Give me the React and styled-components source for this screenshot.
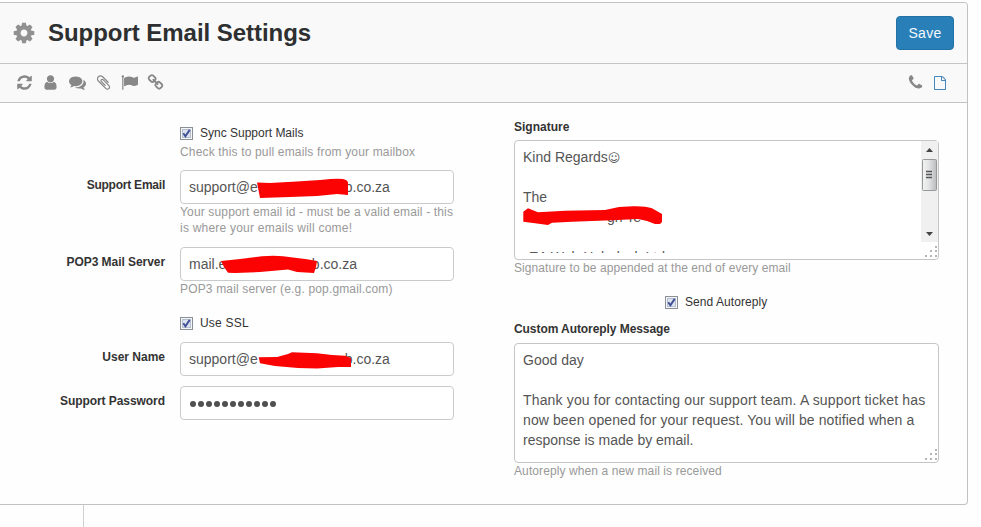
import React from "react";
import styled, { createGlobalStyle } from "styled-components";

const GlobalStyle = createGlobalStyle`
  *, *::before, *::after { box-sizing: border-box; }
  html, body { margin: 0; background: #fefefe; overflow: hidden; }
  body { font-family: "Liberation Sans", Arial, sans-serif; font-size: 12px; color: #333; }
`;

const Page = styled.div`
  display: flex;
  flex-direction: column;
  width: 981px;
  height: 527px;
  padding-top: 2px;
`;

const Panel = styled.main`
  width: 968px;
  height: 503px;
  border: 1px solid #c1c2c2;
  border-left: 0;
  border-radius: 0 4px 4px 0;
  background: #fefefe;
  overflow: hidden;
`;

const Header = styled.header`
  display: flex;
  align-items: center;
  height: 61px;
  padding: 0 13px 0 12px;
  background: #f9f9f9;
  border-bottom: 1px solid #c3c4c4;
`;

const Title = styled.h1`
  flex: 1;
  margin: 0 0 0 12px;
  font-size: 24px;
  line-height: 30px;
  font-weight: bold;
  color: #2d2f30;
  letter-spacing: -0.04px;
`;

const SaveButton = styled.button`
  width: 58px;
  height: 34px;
  border: 1px solid #2372a6;
  border-radius: 4px;
  padding: 0;
  background: #2980b9;
  color: #f3f8fc;
  font: 14px "Liberation Sans", Arial, sans-serif;
  letter-spacing: 0.3px;
`;

const Toolbar = styled.nav`
  display: flex;
  align-items: center;
  justify-content: space-between;
  height: 39px;
  padding: 0 20px 1px 16px;
  background: #f9f9f9;
  border-bottom: 1px solid #c3c4c4;
`;

const IconGroup = styled.div`
  display: flex;
  align-items: center;
  gap: ${(p) => p.$gap}px;
`;

const Glyph = styled.svg`
  display: block;
  flex: none;
  fill: ${(p) => p.$color || "#888"};
`;

const Form = styled.form`
  display: flex;
  gap: 60px;
  padding-top: 16px;
`;

const Column = styled.section`
  display: flex;
  flex-direction: column;
  width: ${(p) => p.$width}px;
  padding-top: ${(p) => p.$top || 0}px;
`;

const Row = styled.div`
  display: grid;
  grid-template-columns: 165px 274px;
  column-gap: 15px;
  margin-top: ${(p) => p.$top || 0}px;
`;

const Cell = styled.div`
  grid-column: 2;
`;

const SideLabel = styled.label`
  padding-top: 7px;
  line-height: 16px;
  font-weight: bold;
  text-align: right;
  white-space: nowrap;
  letter-spacing: ${(p) => p.$ls || 0}px;
`;

const TopLabel = styled.label`
  height: 16px;
  margin-top: ${(p) => p.$top || 0}px;
  line-height: 16px;
  font-weight: bold;
  letter-spacing: ${(p) => p.$ls || 0}px;
`;

const Help = styled.p`
  margin: ${(p) => p.$top || 0}px 0 0;
  line-height: 16px;
  color: #999;
  white-space: nowrap;
  letter-spacing: ${(p) => p.$ls || 0}px;
`;

const CheckRow = styled.label`
  display: flex;
  align-items: center;
  gap: 7px;
  height: 16px;
  margin-top: ${(p) => p.$top || 0}px;
  margin-left: ${(p) => p.$left || 0}px;
  letter-spacing: ${(p) => p.$ls || 0}px;
`;

const Field = styled.div`
  position: relative;
  display: flex;
  align-items: center;
  height: 34px;
  padding: 0 8px;
  border: 1px solid #c9cacb;
  border-radius: 4px;
  background: #fff;
  color: #555;
  font-size: 14px;
  white-space: pre;
`;

const Hidden = styled.span`
  width: ${(p) => p.$width}px;
`;

const Scribble = styled.svg`
  position: absolute;
  left: -1px;
  top: -1px;
  fill: #fb0303;
`;

const Dots = styled.span`
  display: flex;
  gap: 2px;
  padding-left: 1px;
  padding-top: 2px;
`;

const Dot = styled.i`
  width: 6px;
  height: 6px;
  border-radius: 50%;
  background: #505050;
`;

const TextBox = styled.div`
  position: relative;
  height: 120px;
  margin-top: ${(p) => p.$top}px;
  border: 1px solid #c4c5c6;
  border-radius: 4px;
  background: #fff;
  color: #555;
  font-size: 14px;
  line-height: 20px;
`;

const TextArea = styled.div`
  height: ${(p) => p.$height}px;
  padding: 6px 0 0 8px;
  overflow: hidden;
  white-space: pre;
`;

const Line = styled.div`
  height: 20px;
  letter-spacing: ${(p) => p.$ls || 0}px;
  padding-left: ${(p) => p.$left || 0}px;
`;

const Smiley = styled.span`
  font-family: "DejaVu Sans", sans-serif;
  font-size: 12px;
`;

const ScrollBar = styled.svg`
  position: absolute;
  right: 0;
  top: 0;
`;

const Grip = styled.svg`
  position: absolute;
  right: 0;
  bottom: 0;
  fill: #b5b5b5;
`;

const Divider = styled.div`
  width: 84px;
  flex: 1;
  border-right: 1px solid #cfcfcf;
`;

const PATHS = {
  cog: "M1152 896q0-106-75-181t-181-75-181 75-75 181 75 181 181 75 181-75 75-181zm512-109v222q0 12-8 23t-20 13l-185 28q-19 54-39 91 35 50 107 138 10 12 10 25t-9 23q-27 37-99 108t-94 71q-12 0-26-9l-138-108q-44 23-91 38-16 136-29 186-7 28-36 28h-222q-14 0-24.500-8.500t-11.500-21.500l-28-184q-49-16-90-37l-141 107q-10 9-25 9-14 0-25-11-126-114-165-168-7-10-7-23 0-12 8-23 15-21 51-66.500t54-70.500q-27-50-41-99l-183-27q-13-2-21-12.500t-8-23.500v-222q0-12 8-23t19-13l186-28q14-46 39-92-40-57-107-138-10-12-10-24 0-10 9-23 26-36 98.500-107.500t94.500-71.500q13 0 26 10l138 107q44-23 91-38 16-136 29-186 7-28 36-28h222q14 0 24.500 8.500t11.500 21.500l28 184q49 16 90 37l142-107q9-9 24-9 13 0 25 10 129 119 165 170 7 8 7 22 0 12-8 23-15 21-51 66.500t-54 70.500q26 50 41 98l183 28q13 2 21 12.500t8 23.500z",
  refresh: "M1639 1056q0 5-1 7-64 268-268 434.500t-478 166.500q-146 0-282.500-55t-243.500-157l-129 129q-19 19-45 19t-45-19-19-45v-448q0-26 19-45t45-19h448q26 0 45 19t19 45-19 45l-137 137q71 66 161 102t187 36q134 0 250-65t186-179q11-17 53-117 8-23 30-23h192q13 0 22.500 9.500t9.500 22.500zm25-800v448q0 26-19 45t-45 19h-448q-26 0-45-19t-19-45 19-45l138-138q-148-137-349-137-134 0-250 65t-186 179q-11 17-53 117-8 23-30 23h-199q-13 0-22.500-9.500t-9.500-22.500v-7q65-268 270-434.500t480-166.500q146 0 284 55.500t245 156.500l130-129q19-19 45-19t45 19 19 45z",
  user: "M1536 1399q0 109-62.500 187t-150.500 78h-854q-88 0-150.500-78t-62.500-187q0-85 8.500-160.500t31.500-152 58.500-131 94-89 134.500-34.500q131 128 313 128t313-128q76 0 134.500 34.500t94 89 58.500 131 31.500 152 8.500 160.500zm-256-887q0 159-112.500 271.500t-271.500 112.500-271.500-112.500-112.500-271.500 112.500-271.500 271.500-112.500 271.500 112.500 112.500 271.500z",
  comments: "M1408 768q0 139-94 257t-256.500 186.500-353.500 68.500q-86 0-176-16-124 88-278 128-36 9-86 16h-3q-11 0-20.500-8t-11.500-21q-1-3-1-6.500t.5-6.500 2-6l2.500-5 3.500-5.500 4-5 4.500-5 4-4.500q5-6 23-25t26-29.500 22.500-29 25-38.500 20.500-44q-124-72-195-177t-71-224q0-139 94-257t256.500-186.500 353.500-68.500 353.500 68.500 256.500 186.500 94 257zm384 256q0 120-71 224.500t-195 176.500q10 24 20.500 44t25 38.500 22.500 29 26 29.500 23 25q1 1 4 4.500t4.500 5 4 5 3.500 5.500l2.500 5 2 6 .5 6.500-1 6.500q-3 14-13 22t-22 7q-50-7-86-16-154-40-278-128-90 16-176 16-271 0-472-132 58 4 88 4 161 0 309-45t264-129q125-92 192-212t67-254q0-77-23-152 129 71 204 178t75 230z",
  clip: "M1596 1385q0 117-79 196t-196 79q-135 0-235-100l-777-776q-113-115-113-271 0-159 110-270t269-111q158 0 273 113l605 606q10 10 10 22 0 16-30.500 46.500t-46.500 30.500q-13 0-23-10l-606-607q-79-77-181-77-106 0-179 75t-73 181q0 105 76 181l776 777q63 63 145 63 64 0 106-42t42-106q0-82-63-145l-581-581q-26-24-60-24-29 0-48 19t-19 48q0 32 25 59l410 410q10 10 10 22 0 16-31 47t-47 31q-12 0-22-10l-410-410q-63-61-63-149 0-82 57-139t139-57q88 0 149 63l581 581q100 98 100 235z",
  flag: "M320 256q0 72-64 110v1266q0 13-9.500 22.500t-22.500 9.500h-64q-13 0-22.500-9.500t-9.500-22.500v-1266q-64-38-64-110 0-53 37.500-90.500t90.500-37.500 90.500 37.500 37.500 90.500zm1472 64v763q0 25-12.500 38.500t-39.500 27.500q-215 116-369 116-61 0-123.500-22t-108.500-48-115.500-48-142.500-22q-192 0-464 146-17 9-33 9-26 0-45-19t-19-45v-742q0-32 31-55 21-14 79-43 236-120 421-120 107 0 200 29t219 88q38 19 88 19 54 0 117.500-21t110-47 88-47 54.500-21q26 0 45 19t19 45z",
  link: "M1520 1216q0-40-28-68l-208-208q-28-28-68-28-42 0-72 32 3 3 19 18.500t21.500 21.500 15 19 13 25.500 3.500 27.500q0 40-28 68t-68 28q-15 0-27.500-3.500t-25.500-13-19-15-21.500-21.500-18.500-19q-33 31-33 73 0 40 28 68l206 207q27 27 68 27 40 0 68-26l147-146q28-28 28-67zm-703-705q0-40-28-68l-206-207q-28-28-68-28-39 0-68 27l-147 146q-28 28-28 67 0 40 28 68l208 208q27 27 68 27 42 0 72-31-3-3-19-18.500t-21.500-21.500-15-19-13-25.500-3.500-27.500q0-40 28-68t68-28q15 0 27.500 3.500t25.500 13 19 15 21.500 21.500 18.500 19q33-31 33-73zm895 705q0 120-85 203l-147 146q-83 83-203 83-121 0-204-85l-206-207q-83-83-83-203 0-123 88-209l-88-88q-86 88-208 88-120 0-204-84l-208-208q-84-84-84-204t85-203l147-146q83-83 203-83 121 0 204 85l206 207q83 83 83 203 0 123-88 209l88 88q86-88 208-88 120 0 204 84l208 208q84 84 84 204z",
  phone: "M1600 1240q0 27-10 70.500t-21 68.500q-21 50-122 106-94 51-186 51-27 0-53-3.500t-57.500-12.500-47-14.500-55.500-20.500-49-18q-98-35-175-83-127-79-264-216t-216-264q-48-77-83-175-3-9-18-49t-20.500-55.500-14.500-47-12.500-57.500-3.500-53q0-92 51-186 56-101 106-122 25-11 68.500-21t70.500-10q14 0 21 3 18 6 53 76 11 19 30 54t35 63.500 31 53.500q3 4 17.500 25t21.500 35.500 7 28.500q0 20-28.500 50t-62 55-62 53-28.500 46q0 9 5 22.500t8.500 20.500 14 24 11.500 19q76 137 174 235t235 174q2 1 19 11.500t24 14 20.500 8.500 22.500 5q18 0 46-28.500t53-62 55-62 50-28.500q14 0 28.500 7t35.500 21.500 25 17.500q25 15 53.500 31t63.500 35 54 30q70 35 76 53 3 7 3 21z",
  file: "M1596 380q28 28 48 76t20 88v1152q0 40-28 68t-68 28h-1344q-40 0-68-28t-28-68v-1600q0-40 28-68t68-28h896q40 0 88 20t76 48zm-444-244v376h376q-10-29-22-41l-313-313q-12-12-41-22zm384 1528v-1024h-416q-40 0-68-28t-28-68v-416h-768v1536h1280z",
};

const Icon = ({ name, size = 17, color }) => (
  <Glyph width={size} height={size} viewBox="0 0 1792 1792" $color={color}>
    <path d={PATHS[name]} />
  </Glyph>
);

const CheckMark = () => (
  <svg width="13" height="13" viewBox="0 0 13 13">
    <rect x="0.5" y="0.5" width="12" height="12" fill="#f4f5f6" stroke="#8b9097" />
    <rect x="2.5" y="2.5" width="8" height="8" fill="#dce3ee" stroke="#b5bfd0" />
    <path d="M3.3 6.3 5.4 9.3 9.7 2.9" fill="none" stroke="#414f96" strokeWidth="1.9" />
  </svg>
);

const Redaction = ({ d }) => (
  <Scribble width="274" height="90">
    <path d={d} />
  </Scribble>
);

const ResizeGrip = () => (
  <Grip width="14" height="14">
    {[[11, 1], [6, 5], [11, 5], [1, 10], [6, 10], [11, 10]].map(([x, y]) => (
      <rect key={`${x}-${y}`} x={x} y={y} width="2" height="2" />
    ))}
  </Grip>
);

const Scroll = () => (
  <ScrollBar width="17" height="101" viewBox="0 0 17 101">
    <defs>
      <linearGradient id="thumb" x1="0" x2="1">
        <stop offset="0" stopColor="#f3f3f3" />
        <stop offset="0.45" stopColor="#e2e3e4" />
        <stop offset="1" stopColor="#b9bbbd" />
      </linearGradient>
    </defs>
    <rect width="17" height="101" fill="#f0f0f0" />
    <path d="M5 11 8.500 7 12 11z" fill="#444" />
    <path d="M5 91h7l-3.500 4z" fill="#444" />
    <rect x="1.500" y="18.500" width="14" height="31" rx="1" fill="url(#thumb)" stroke="#96989a" />
    <path d="M5 30.500h6M5 33.500h6M5 36.500h6" stroke="#555" strokeWidth="1.500" />
  </ScrollBar>
);

export default function App() {
  return (
    <>
      <GlobalStyle />
      <Page>
        <Panel>
          <Header>
            <Icon name="cog" size={24} color="#919191" />
            <Title>Support Email Settings</Title>
            <SaveButton type="button">Save</SaveButton>
          </Header>
          <Toolbar>
            <IconGroup $gap={9.3}>
              {["refresh", "user", "comments", "clip", "flag", "link"].map((name) => (
                <Icon key={name} name={name} />
              ))}
            </IconGroup>
            <IconGroup $gap={9}>
              <Icon name="phone" />
              <Icon name="file" size={14} color="#4687bd" />
            </IconGroup>
          </Toolbar>
          <Form>
            <Column $width={454} $top={6}>
              <Row>
                <Cell>
                  <CheckRow><CheckMark />Sync Support Mails</CheckRow>
                </Cell>
                <Cell>
                  <Help $top={3} $ls={0.165}>Check this to pull emails from your mailbox</Help>
                </Cell>
              </Row>
              <Row $top={10}>
                <SideLabel $ls={-0.23}>Support Email</SideLabel>
                <Field>
                  support@e<Hidden $width={87} />b.co.za
                  <Redaction d="M77 12.500 90 13 117 11.500 140 10Q157 8 163 9 168 10 168 13V25L157 24 137 26 110 27 80 28Z" />
                </Field>
                <Cell>
                  <Help $ls={0.155}>Your support email id - must be a valid email - this</Help>
                  <Help $ls={0.22}>is where your emails will come!</Help>
                </Cell>
              </Row>
              <Row $top={11}>
                <SideLabel $ls={-0.06}>POP3 Mail Server</SideLabel>
                <Field>
                  mail.e<Hidden $width={85.5} />b.co.za
                  <Redaction d="M41 14 60 12 82 9.300Q94 8 103 9.300L127 12.300 137 14 136 20 134 26 117 25 108 22.500 80 25 55 26 48 25.700 44 20Z" />
                </Field>
                <Cell>
                  <Help $ls={0.16}>POP3 mail server (e.g. pop.gmail.com)</Help>
                </Cell>
              </Row>
              <Row $top={18}>
                <Cell>
                  <CheckRow $ls={0.2}><CheckMark />Use SSL</CheckRow>
                </Cell>
              </Row>
              <Row $top={11}>
                <SideLabel>User Name</SideLabel>
                <Field>
                  support@e<Hidden $width={87} />b.co.za
                  <Redaction d="M78.700 15.300 97 15 108 12 112 10.300 137 11.300 152 13 165 13.700 171 16 171 25 158 25 137 26.500 118 26 95 24 80 21.300Z" />
                </Field>
              </Row>
              <Row $top={10}>
                <SideLabel $ls={-0.06}>Support Password</SideLabel>
                <Field>
                  <Dots>
                    {Array.from({ length: 11 }, (_, i) => <Dot key={i} />)}
                  </Dots>
                </Field>
              </Row>
            </Column>
            <Column $width={425}>
              <TopLabel>Signature</TopLabel>
              <TextBox $top={5}>
                <TextArea $height={112}>
                  <Line>Kind Regards<Smiley>☺</Smiley></Line>
                  <Line />
                  <Line>The</Line>
                  <Line $left={84}>gn Te</Line>
                  <Line />
                  <Line $left={6}>EA Web Helpdesk Ltd</Line>
                </TextArea>
                <Redaction d="M9.300 71.700 14 68.300 24 72.300 51 70.700 91 70 105 67 119 66.300Q132 66 138 68.300L148 74V82L146 84H141L133 81 124 79 98 80.300 58 81.700 38 82.700 34 85 21 83.300 9.300 81.700Z" />
                <Scroll />
                <ResizeGrip />
              </TextBox>
              <Help $ls={0.08}>Signature to be appended at the end of every email</Help>
              <CheckRow $top={18} $left={151} $ls={0.06}><CheckMark />Send Autoreply</CheckRow>
              <TopLabel $top={11} $ls={-0.07}>Custom Autoreply Message</TopLabel>
              <TextBox $top={6}>
                <TextArea $height={118}>
                  <Line>Good day</Line>
                  <Line />
                  <Line $ls={0.16}>Thank you for contacting our support team. A support ticket has</Line>
                  <Line $ls={0.1}>now been opened for your request. You will be notified when a</Line>
                  <Line>response is made by email.</Line>
                </TextArea>
                <ResizeGrip />
              </TextBox>
              <Help $ls={0.1}>Autoreply when a new mail is received</Help>
            </Column>
          </Form>
        </Panel>
        <Divider />
      </Page>
    </>
  );
}
